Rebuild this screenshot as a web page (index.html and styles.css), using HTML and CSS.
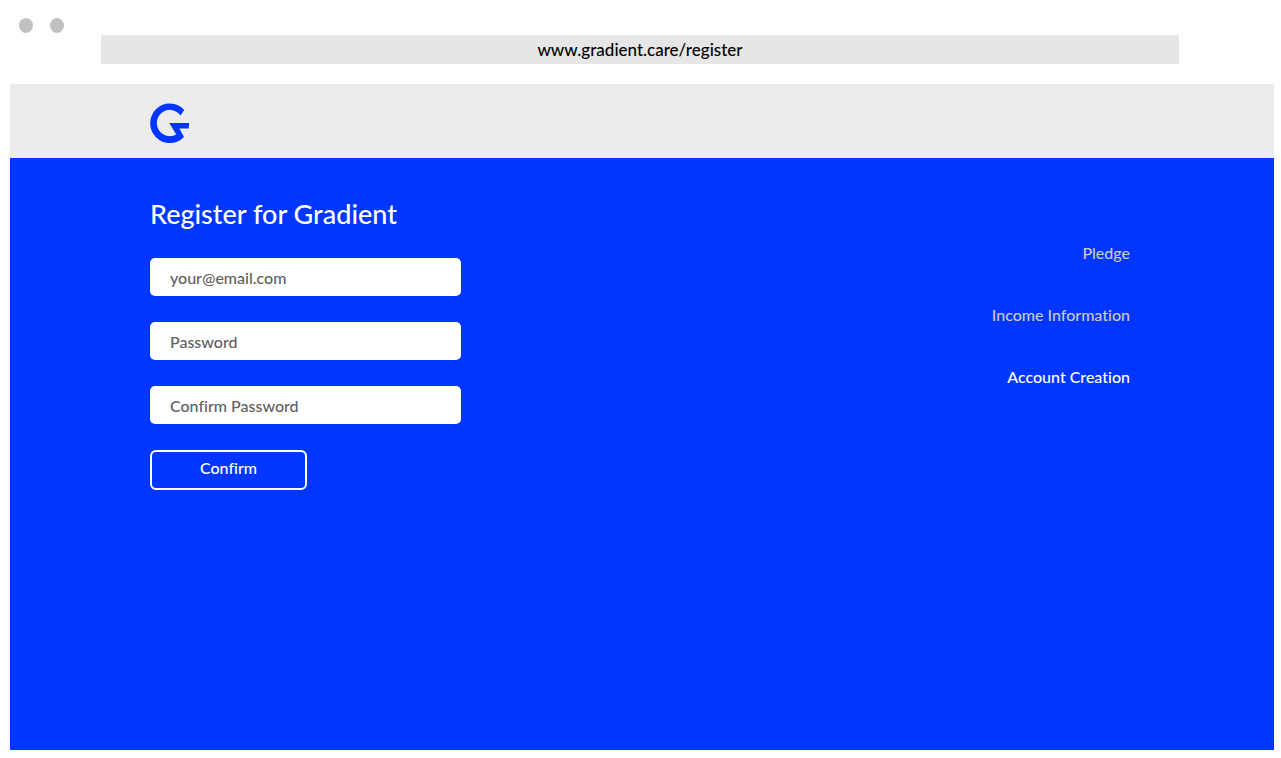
FILE: index.html
```html
<!DOCTYPE html>
<html lang="en">
<head>
<meta charset="utf-8">
<meta name="viewport" content="width=device-width, initial-scale=1">
<title>Register for Gradient</title>
<link rel="stylesheet" href="styles.css">
</head>
<body>
<div class="chrome">
  <div class="dots"><span class="dot"></span><span class="dot"></span></div>
  <input class="address" type="text" aria-label="Address" value="www.gradient.care/register">
</div>
<div class="site">
  <header class="header">
    <a class="logo" href="#" aria-label="Gradient home">
      <svg width="40" height="40" viewBox="0 0 40 40" aria-hidden="true"><path fill="#0036ff" d="M34.2 6.9A19.6 19.8 0 1 0 34 33.9L29.4 25.6H38.7L39.2 20H19.2L26.2 31.6A13 13.2 0 1 1 30.6 12.6Z"/></svg>
    </a>
  </header>
  <main class="main">
    <form class="form">
      <h1 class="title">Register for Gradient</h1>
      <input class="field" type="email" aria-label="Email" placeholder="your@email.com">
      <input class="field" type="password" aria-label="Password" placeholder="Password">
      <input class="field" type="password" aria-label="Confirm password" placeholder="Confirm Password">
      <button class="confirm" type="button">Confirm</button>
    </form>
    <nav class="steps" aria-label="Registration steps">
      <a class="step" href="#">Pledge</a>
      <a class="step" href="#">Income Information</a>
      <a class="step step-current" href="#" aria-current="step">Account Creation</a>
    </nav>
  </main>
</div>
</body>
</html>
```
FILE: styles.css
```css
* {
  box-sizing: border-box;
}

body {
  margin: 0;
  min-height: 100vh;
  padding: 0 7px 8px 10px;
  display: flex;
  flex-direction: column;
  background: #fff;
  font-family: Lato, sans-serif;
  font-size: 16px;
  font-weight: 500;
  font-variant-ligatures: none;
  line-height: 24px;
}

input,
button {
  font: inherit;
  font-variant-ligatures: none;
}

.chrome {
  display: flex;
  align-items: flex-start;
  padding: 18px 95px 20px 9px;
}

.dots {
  display: flex;
  gap: 17px;
  width: 82px;
}

.dot {
  width: 14px;
  height: 15px;
  border-radius: 50%;
  background: #c0c0c0;
}

.address {
  flex: 1;
  min-width: 0;
  height: 29px;
  margin-top: 17px;
  padding: 0;
  border: 0;
  background: #e6e6e6;
  color: #000;
  font-size: 17px;
  text-align: center;
}

.site {
  flex: 1;
  display: flex;
  flex-direction: column;
}

.header {
  padding: 19px 140px 15px;
  background: #ececec;
}

.logo,
.logo svg {
  display: block;
  width: 40px;
  height: 40px;
}

.main {
  flex: 1;
  display: flex;
  justify-content: space-between;
  align-items: flex-start;
  padding: 38px 144px 38px 140px;
  background: #0036ff;
  color: #fff;
}

.form {
  display: flex;
  flex-direction: column;
  align-items: flex-start;
  gap: 26px;
}

.title {
  margin: 0;
  font-size: 27px;
  font-weight: 500;
  line-height: 36px;
}

.field {
  width: 311px;
  height: 38px;
  padding: 0 20px;
  border: 0;
  border-radius: 5px;
  background: #fff;
  color: #606060;
}

.field::placeholder {
  color: #606060;
  opacity: 1;
}

.confirm {
  width: 157px;
  height: 40px;
  padding: 0 0 4px;
  border: 2px solid #fff;
  border-radius: 6px;
  background: transparent;
  color: #fff;
}

.steps {
  display: flex;
  flex-direction: column;
  align-items: flex-end;
  gap: 38px;
  padding-top: 45px;
}

.step {
  color: #c8c8c8;
  text-decoration: none;
}

.step-current {
  color: #fff;
}
```
